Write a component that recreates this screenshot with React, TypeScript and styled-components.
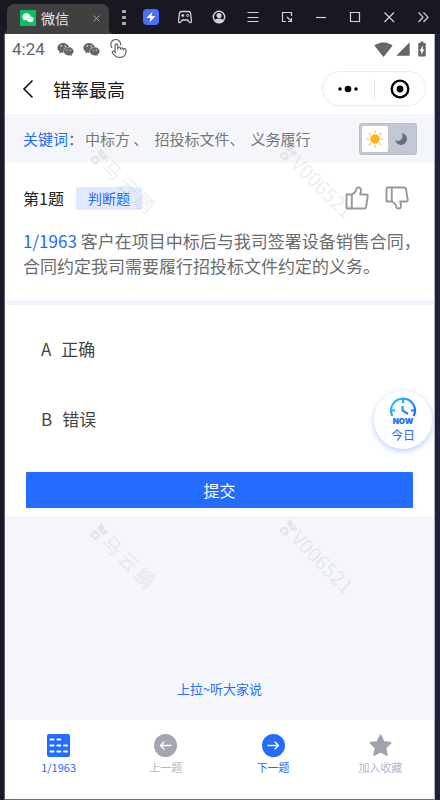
import React, { useState } from "react";
import styled, { createGlobalStyle, css } from "styled-components";
import { FaWeixin } from "react-icons/fa";
import {
  MdBatteryChargingFull,
  MdSignalCellular4Bar,
  MdSignalWifi4Bar,
} from "react-icons/md";

const BLUE = "#246bff";

const GlobalStyle = createGlobalStyle`
  * { box-sizing: border-box; }
  body {
    margin: 0;
    background: #1c1c2a;
    font-family: "Noto Sans CJK SC", "Noto Sans", sans-serif;
  }
  button { font: inherit; color: inherit; padding: 0; border: 0; background: none; cursor: pointer; }
  svg { display: block; flex: none; }
`;

const Window = styled.div`
  min-height: 100vh;
  display: flex;
  flex-direction: column;
  background: linear-gradient(90deg, #1b1927 50%, #20203a 50%);
`;

const TitleBar = styled.header`
  height: 34px;
  display: flex;
  align-items: center;
  padding: 0 0 0 7px;
  background: #181820;
  color: #d2d2d6;
`;

const Tab = styled.div`
  position: relative;
  align-self: flex-end;
  width: 102px;
  height: 30px;
  display: flex;
  align-items: center;
  gap: 5px;
  padding: 0 8px 2px 13px;
  border-radius: 7px 7px 0 0;
  background: #404041;
  color: #e6e6e6;
  font-size: 14px;
  line-height: 20px;
  &::before,
  &::after {
    content: "";
    position: absolute;
    bottom: 0;
    width: 5px;
    height: 5px;
  }
  &::before {
    right: 100%;
    background: radial-gradient(circle at 0 0, transparent 5px, #404041 5px);
  }
  &::after {
    left: 100%;
    background: radial-gradient(circle at 100% 0, transparent 5px, #404041 5px);
  }
`;

const TabLogo = styled.span`
  width: 16px;
  height: 16px;
  display: grid;
  place-items: center;
  border-radius: 1px;
  background: #08c25f;
  color: #fff;
`;

const TabClose = styled.button`
  margin-left: auto;
  color: #a8a8a8;
`;

const WindowTools = styled.div`
  flex: 1;
  display: flex;
  align-items: center;
  margin-left: 11px;
`;

const ToolButton = styled.button<{ $narrow: boolean }>`
  ${(p) =>
    p.$narrow
      ? css`
          width: 8px;
          margin-right: 6px;
        `
      : css`
          flex: 1;
        `}
  height: 20px;
  display: grid;
  place-items: center;
`;

const Screen = styled.main`
  position: relative;
  flex: 1;
  display: flex;
  flex-direction: column;
  margin: 0 5px 0 4px;
  overflow: hidden;
  border: solid;
  border-width: 0 1px 1px;
  border-color: #5f5c72 #b4b4c0 #6d6c78 #5f5c72;
  background: #fff;
`;

const StatusBar = styled.div`
  height: 30px;
  display: flex;
  align-items: center;
  gap: 9px;
  padding: 0 3px 0 7px;
  color: #666;
`;

const Clock = styled.time`
  font-family: Roboto, sans-serif;
  font-size: 17px;
  line-height: 20px;
  margin-right: 3px;
`;

const StatusRight = styled.div`
  display: flex;
  align-items: center;
  gap: 2px;
  margin-left: auto;
`;

const AppBar = styled.div`
  height: 50px;
  display: flex;
  align-items: center;
  padding: 0 8px 1px 16px;
`;

const BackButton = styled.button`
  width: 32px;
  height: 32px;
`;

const Title = styled.h1`
  margin: 0;
  font-size: 18px;
  line-height: 28px;
  font-weight: 400;
  color: #1a1a1a;
`;

const Capsule = styled.div`
  width: 104px;
  height: 35px;
  display: flex;
  align-items: center;
  margin-left: auto;
  border: 1px solid #ebebeb;
  border-radius: 18px;
`;

const CapsuleButton = styled.button`
  flex: 1;
  height: 20px;
  display: grid;
  place-items: center;
  & + & { border-left: 1px solid #e6e6e6; }
`;

const KeywordBar = styled.div`
  height: 49px;
  display: flex;
  align-items: center;
  padding: 0 17px 0 18px;
  background: #f4f6fb;
  color: #777;
  font-size: 15px;
  line-height: 24px;
`;

const KeywordLabel = styled.span`
  width: 62px;
  color: ${BLUE};
  white-space: nowrap;
`;

const Keywords = styled.div`
  display: flex;
  gap: 6px;
  white-space: nowrap;
`;

const ThemeSwitch = styled.div`
  width: 58px;
  height: 32px;
  display: flex;
  margin-left: auto;
  padding: 2px;
  border: 1px solid #b9c0cb;
  border-radius: 3px;
  background: #c2c8d3;
`;

const ThemeOption = styled.button<{ $on: boolean }>`
  flex: 1;
  display: grid;
  place-items: center;
  border-radius: 2px;
  background: ${(p) => (p.$on ? "#fff" : "transparent")};
`;

const Question = styled.section`
  height: 137px;
  padding: 21px 18px 0;
`;

const QuestionHead = styled.div`
  display: flex;
  align-items: center;
  height: 28px;
  margin-bottom: 16px;
`;

const QuestionNo = styled.h2`
  margin: 0 12px 0 0;
  font-size: 16px;
  line-height: 24px;
  font-weight: 400;
  color: #222;
`;

const TypeTag = styled.span`
  padding: 0 12px;
  border-radius: 2px;
  background: #e1e9ff;
  color: ${BLUE};
  font-size: 14px;
  line-height: 23px;
`;

const Votes = styled.div`
  display: flex;
  gap: 16px;
  margin-left: auto;
  padding-right: 7px;
`;

const QuestionText = styled.p`
  margin: 0 -8px 0 0;
  color: #6c6c6c;
  font-size: 17px;
  line-height: 25px;
`;

const Count = styled.span`
  color: ${BLUE};
`;

const Answers = styled.section`
  display: flex;
  flex-direction: column;
  padding: 9px 21px 8px;
  border-top: 5px solid #f3f5fd;
`;

const Option = styled.button`
  height: 70px;
  display: flex;
  align-items: center;
  gap: 10px;
  padding: 0 15px;
  color: #444;
  font-size: 17px;
  line-height: 24px;
  text-align: left;
`;

const Submit = styled.button`
  height: 36px;
  margin-top: 18px;
  border-radius: 1px;
  background: ${BLUE};
  color: #fff;
  font-size: 16px;
  line-height: 24px;
`;

const Discussion = styled.section`
  flex: 1;
  display: flex;
  align-items: flex-end;
  justify-content: center;
  padding-bottom: 21px;
  background: #f4f6fb;
`;

const DiscussionLink = styled.a`
  color: ${BLUE};
  font-size: 13px;
  line-height: 20px;
  text-decoration: none;
`;

const BottomNav = styled.nav`
  height: 79px;
  display: grid;
  grid-template-columns: repeat(4, 1fr);
`;

const NavButton = styled.button<{ $active?: boolean }>`
  display: flex;
  flex-direction: column;
  align-items: center;
  gap: 1px;
  padding-top: 14px;
  color: ${(p) => (p.$active ? BLUE : "#b2b6c6")};
  font-size: 11px;
  line-height: 18px;
`;

const TodayButton = styled.button`
  position: absolute;
  right: 2px;
  top: 357px;
  width: 58px;
  height: 58px;
  display: flex;
  flex-direction: column;
  align-items: center;
  padding-top: 5px;
  border-radius: 50%;
  background: #fff;
  box-shadow: 0 2px 6px rgba(36, 107, 255, 0.35);
  color: ${BLUE};
  font-size: 12px;
  line-height: 20px;
`;

const Watermark = styled.div<{ $top: number; $column: "left" | "right" }>`
  position: absolute;
  top: ${(p) => p.$top}px;
  ${(p) =>
    p.$column === "left"
      ? css`
          left: 20%;
          font-size: 19px;
        `
      : css`
          left: 64%;
          font-size: 20px;
        `}
  display: flex;
  align-items: center;
  transform: rotate(45deg);
  transform-origin: 8px 12px;
  color: rgba(120, 120, 120, 0.14);
  line-height: 24px;
  white-space: pre;
  pointer-events: none;
`;

const Mark = () => (
  <svg width="18" height="18" viewBox="0 0 18 18" fill="none" stroke="currentColor">
    <g transform="rotate(-45 9 9)">
      <circle cx="4.500" cy="12.500" r="3.200" strokeWidth="2.600" />
      <path d="M7 5.500 10.500 0l3.500 5-3.500 5zM10.500 10.500l4-4.500 3.500 5-6 1z" fill="currentColor" stroke="none" />
    </g>
  </svg>
);

const TouchIcon = () => (
  <svg width="19" height="20" viewBox="0 0 19 20" fill="none" stroke="currentColor" strokeWidth="1.800" strokeLinecap="round" strokeLinejoin="round">
    <path d="M2.800 8.300A4.900 4.900 0 1 1 11.600 6" strokeWidth="1.200" />
    <g transform="translate(2 3.500) scale(.68)">
      <path d="M18 11v-1a2 2 0 0 0-4 0M14 10V9a2 2 0 0 0-4 0v1M10 9.500V4a2 2 0 0 0-4 0v10M18 11a2 2 0 1 1 4 0v3a8 8 0 0 1-8 8h-2c-2.800 0-4.500-.860-5.990-2.340l-3.600-3.600a2 2 0 0 1 2.830-2.820L7 15" />
    </g>
  </svg>
);

const Thumb = ({ down = false }: { down?: boolean }) => (
  <svg width="24" height="24" viewBox="0 0 24 24" fill="none" stroke="#999" strokeWidth="1.900" strokeLinejoin="round">
    <g transform={down ? "matrix(1 0 0 -1 0 24)" : undefined}>
      <path d="M1.500 8.500h5.300v14H2.600a1.100 1.100 0 0 1-1.100-1.100z" />
      <path d="M6.800 8.500c3-1.400 4.200-3.200 4.700-6 .3-1.400 4.200-1.600 4.500 1.200.1 1.600-.3 3.200-.8 4.800h6.200c.9 0 1.400.6 1.300 1.500l-1.600 11c-.1.900-.8 1.500-1.700 1.500H6.800" />
    </g>
  </svg>
);

const Sun = () => (
  <svg width="18" height="18" viewBox="0 0 18 18" fill="#ffb41f" stroke="#ffb41f" strokeWidth="1.200" strokeLinecap="round">
    <circle cx="9" cy="9" r="4.200" />
    <path d="M9 1v1.500M9 15.500V17M1 9h1.500M15.500 9H17M3.300 3.300l1 1M13.700 13.700l1 1M3.300 14.700l1-1M13.700 4.300l1-1" />
  </svg>
);

const Moon = () => (
  <svg width="14" height="14" viewBox="0 0 14 14">
    <path d="M7.800 1a6 6 0 1 1-6.700 7.200c2 1.200 4.600 1 6-.6 1.600-1.800 1.800-4.400.7-6.600z" fill="#666f80" />
  </svg>
);

const TodayIcon = () => (
  <svg width="30" height="29" viewBox="0 0 30 29" fill="none">
    <defs>
      <linearGradient id="today" gradientUnits="userSpaceOnUse" x1="4" y1="4" x2="25" y2="22">
        <stop offset="0" stopColor="#2cc8f8" />
        <stop offset="1" stopColor="#1768ff" />
      </linearGradient>
    </defs>
    <path d="M4.300 20A12 12 0 1 1 25.700 20M15 3v4M3 14.500h4M23 14.500h4M14.500 10v4.500l5.500 3.500" stroke="url(#today)" strokeWidth="2.200" />
    <text x="15" y="28" textAnchor="middle" fill={BLUE} fontFamily="Inter, sans-serif" fontSize="8" fontWeight="900">NOW</text>
  </svg>
);

const ArrowDisc = ({ back = false }: { back?: boolean }) => (
  <svg width="23" height="23" viewBox="0 0 23 23" fill="none">
    <circle cx="11.500" cy="11.500" r="11.500" fill={back ? "#a2a6b0" : BLUE} />
    <path
      d={back ? "M17 11.500H6.500M10 8l-3.500 3.500L10 15" : "M6 11.500h10.500M13 8l3.500 3.500L13 15"}
      stroke="#fff" strokeWidth="1.400" strokeLinecap="round" strokeLinejoin="round"
    />
  </svg>
);

const ListIcon = () => (
  <svg width="23" height="23" viewBox="0 0 23 23">
    <rect width="23" height="23" rx="2" fill={BLUE} />
    <path d="M3.500 5.500h3M10.300 5.500h3M3.500 11.500h3M10.300 11.500h3M17 11.500h3M3.500 17.500h3M10.300 17.500h3M17 17.500h3" stroke="#fff" strokeWidth="2" strokeLinecap="round" />
  </svg>
);

const StarIcon = () => (
  <svg width="23" height="23" viewBox="0 0 23 23">
    <path d="M11.500 1.500l3 6.400 7 .9-5.100 4.900 1.300 7.300-6.200-3.500L5.300 21l1.300-7.300L1.500 8.800l7-.9z" fill="#9fa4ae" stroke="#9fa4ae" strokeWidth="2" strokeLinejoin="round" />
  </svg>
);

const toolIcons: { label: string; width: number; art: React.ReactNode }[] = [
  { label: "更多", width: 6, art: <path d="M1 1h4v3H1zM1 7h4v3H1zM1 13h4v3H1z" fill="#aaa" stroke="none" /> },
  {
    label: "加速", width: 16,
    art: <><rect width="16" height="16" rx="4" fill="#4a70f5" stroke="none" /><path d="M9.500 2.500 3.500 9h4l-1 4.500 6-6.500h-4z" fill="#fff" stroke="none" /></>,
  },
  {
    label: "手柄", width: 16,
    art: <path d="M4.500 2.500h7c1.500 0 2 .8 2.200 2.500l.7 7c.2 1.800-1.200 2-2.200.8L10.700 11H5.300l-1.500 1.800c-1 1.200-2.400 1-2.200-.8l.7-7c.2-1.700.7-2.500 2.200-2.500zM4.300 6.500h3M5.800 5v3M9.200 6.500h1M11.300 6.500h1M10.700 5v.9M10.700 7.200v.9" strokeWidth="1.300" />,
  },
  {
    label: "账号", width: 16,
    art: <><circle cx="8" cy="8" r="5.700" strokeWidth="1.500" /><circle cx="8" cy="6.500" r="2" fill="currentColor" /><path d="M4 12c1-2.500 7-2.500 8 0-2 2.300-6 2.300-8 0z" fill="currentColor" /></>,
  },
  { label: "菜单", width: 12, art: <path d="M.5 3.500h11M.5 8.500h11M.5 12.500h11" /> },
  { label: "缩放", width: 12, art: <path d="M5 12.500H1.500v-9h9V7M6 8l4.500 4.500M10.500 9v3.500H7" /> },
  { label: "最小化", width: 12, art: <path d="M1 8.500h10" /> },
  { label: "最大化", width: 12, art: <path d="M1.500 3.500h9v9h-9z" /> },
  { label: "关闭", width: 12, art: <path d="m1.500 3.500 9.500 9.500M11 3.500 1.500 13" /> },
  { label: "展开", width: 12, art: <path d="m1.500 3.500 4.500 4.700L1.500 13M6.500 3.500 11 8.200 6.500 13" /> },
];

const keywords = ["中标方 、", "招投标文件、", "义务履行"];

export default function App() {
  const [dark, setDark] = useState(false);
  return (
    <Window>
      <GlobalStyle />
      <TitleBar>
        <Tab>
          <TabLogo><FaWeixin size={12} /></TabLogo>
          微信
          <TabClose aria-label="关闭标签">
            <svg width="9" height="9" viewBox="0 0 9 9" stroke="currentColor"><path d="m1.500 1.500 6 6M7.500 1.500l-6 6" /></svg>
          </TabClose>
        </Tab>
        <WindowTools>
          {toolIcons.map((t) => (
            <ToolButton key={t.label} $narrow={t.width < 10} aria-label={t.label}>
              <svg width={t.width} height="16" viewBox={`0 0 ${t.width} 16`} fill="none" stroke="currentColor" strokeWidth="1.200">{t.art}</svg>
            </ToolButton>
          ))}
        </WindowTools>
      </TitleBar>
      <Screen>
        <StatusBar>
          <Clock>4:24</Clock>
          <FaWeixin size={17} />
          <FaWeixin size={17} />
          <TouchIcon />
          <StatusRight>
            <MdSignalWifi4Bar size={19} />
            <MdSignalCellular4Bar size={16} />
            <MdBatteryChargingFull size={18} />
          </StatusRight>
        </StatusBar>
        <AppBar>
          <BackButton aria-label="返回">
            <svg width="16" height="32" viewBox="0 0 16 32" fill="none" stroke="#111" strokeWidth="1.600"><path d="m11.500 7.500-8.500 8.500 8.500 8.500" /></svg>
          </BackButton>
          <Title>错率最高</Title>
          <Capsule>
            <CapsuleButton aria-label="更多选项">
              <svg width="22" height="8" viewBox="0 0 22 8"><circle cx="3" cy="4" r="1.800" /><circle cx="11" cy="4" r="3.300" /><circle cx="19" cy="4" r="1.800" /></svg>
            </CapsuleButton>
            <CapsuleButton aria-label="退出小程序">
              <svg width="20" height="20" viewBox="0 0 20 20"><circle cx="10" cy="10" r="8.300" fill="none" stroke="#000" strokeWidth="2.300" /><circle cx="10" cy="10" r="3.400" /></svg>
            </CapsuleButton>
          </Capsule>
        </AppBar>
        <KeywordBar>
          <KeywordLabel>关键词：</KeywordLabel>
          <Keywords>
            {keywords.map((k) => <span key={k}>{k}</span>)}
          </Keywords>
          <ThemeSwitch>
            <ThemeOption $on={!dark} aria-label="日间模式" onClick={() => setDark(false)}><Sun /></ThemeOption>
            <ThemeOption $on={dark} aria-label="夜间模式" onClick={() => setDark(true)}><Moon /></ThemeOption>
          </ThemeSwitch>
        </KeywordBar>
        <Question>
          <QuestionHead>
            <QuestionNo>第1题</QuestionNo>
            <TypeTag>判断题</TypeTag>
            <Votes>
              <button aria-label="赞"><Thumb /></button>
              <button aria-label="踩"><Thumb down /></button>
            </Votes>
          </QuestionHead>
          <QuestionText><Count>1/1963</Count> 客户在项目中标后与我司签署设备销售合同，合同约定我司需要履行招投标文件约定的义务。</QuestionText>
        </Question>
        <Answers>
          <Option><span>A</span><span>正确</span></Option>
          <Option><span>B</span><span>错误</span></Option>
          <Submit>提交</Submit>
        </Answers>
        <Discussion>
          <DiscussionLink href="#discussion">上拉~听大家说</DiscussionLink>
        </Discussion>
        <BottomNav>
          <NavButton $active><ListIcon />1/1963</NavButton>
          <NavButton><ArrowDisc back />上一题</NavButton>
          <NavButton $active><ArrowDisc />下一题</NavButton>
          <NavButton><StarIcon />加入收藏</NavButton>
        </BottomNav>
        <TodayButton><TodayIcon />今日</TodayButton>
        {[110, 485].map((top) => (
          <React.Fragment key={top}>
            <Watermark $top={top} $column="left"><Mark />马 云 鹏</Watermark>
            <Watermark $top={top - 4} $column="right"><Mark />V006521</Watermark>
          </React.Fragment>
        ))}
      </Screen>
    </Window>
  );
}
